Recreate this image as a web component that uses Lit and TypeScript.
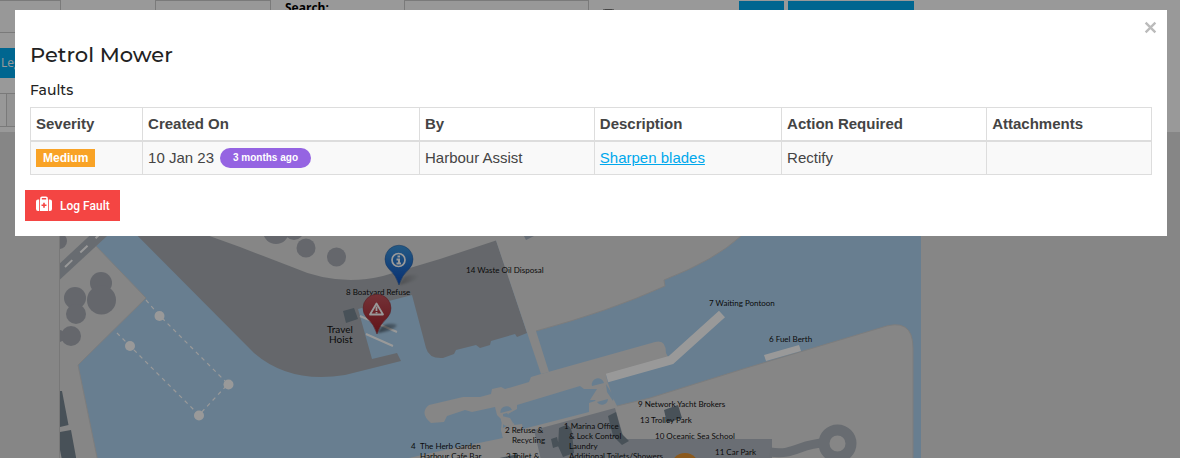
import { LitElement, html, css, svg } from "lit";
import { customElement, property } from "lit/decorators.js";

interface Fault {
  severity: string;
  created: string;
  age: string;
  by: string;
  description: string;
  action: string;
  attachments: string;
}

interface MapLabel {
  x: number;
  y: number;
  text: string;
  big?: boolean;
}

const LABELS: MapLabel[] = [
  { x: 466, y: 273, text: "14 Waste Oil Disposal" },
  { x: 346, y: 295, text: "8 Boatyard Refuse" },
  { x: 327, y: 333, text: "Travel", big: true },
  { x: 329, y: 343, text: "Hoist", big: true },
  { x: 709, y: 306, text: "7 Waiting Pontoon" },
  { x: 769, y: 342, text: "6 Fuel Berth" },
  { x: 638, y: 407, text: "9 Network Yacht Brokers" },
  { x: 640, y: 423, text: "13 Trolley Park" },
  { x: 655, y: 439, text: "10 Oceanic Sea School" },
  { x: 715, y: 455, text: "11 Car Park" },
  { x: 505, y: 433, text: "2 Refuse &" },
  { x: 512, y: 443, text: "Recycling" },
  { x: 506, y: 459, text: "3 Toilet &" },
  { x: 564, y: 429, text: "1 Marina Office" },
  { x: 569, y: 439, text: "& Lock Control" },
  { x: 569, y: 449, text: "Laundry" },
  { x: 569, y: 459, text: "Additional Toilets/Showers" },
  { x: 411, y: 449, text: "4" },
  { x: 420, y: 449, text: "The Herb Garden" },
  { x: 420, y: 459, text: "Harbour Cafe Bar" },
];

@customElement("marina-map")
export class MarinaMap extends LitElement {
  static styles = css`
    :host { display: block; }
    .map { display: block; width: 100%; max-width: 862px; height: auto; }
    .water { fill: #add2f0; }
    .land { fill: #dfdfdf; stroke: #cfd0d1; stroke-width: 1; }
    .plain { fill: #dfdfdf; }
    .yard { fill: #a8acb2; }
    .tree { fill: #a8acb5; }
    .road { fill: none; stroke: #adb4bc; }
    .lot { fill: #b1b8c1; }
    .building { fill: #788793; }
    .dash { fill: none; stroke: #ffffff; stroke-width: 1.2; stroke-dasharray: 4 4; }
    .white { fill: #ffffff; }
    .pontoon { fill: none; stroke: #ffffff; stroke-width: 9; }
    .line { fill: none; stroke: #ffffff; stroke-width: 2; }
    .label { font: 8px Lato, "Open Sans", sans-serif; fill: #111; }
    .big { font-size: 10px; }
  `;

  render() {
    return html`
      <svg class="map" viewBox="60 132 862 328" role="img" aria-label="Marina map">
        <defs>
          <linearGradient id="bluePin" x1="0" y1="0" x2="0" y2="1">
            <stop offset="0" stop-color="#3c96dc" />
            <stop offset="1" stop-color="#0c4fc0" />
          </linearGradient>
          <linearGradient id="redPin" x1="0" y1="0" x2="0" y2="1">
            <stop offset="0" stop-color="#c2545c" />
            <stop offset="1" stop-color="#a32029" />
          </linearGradient>
          <linearGradient id="shade" x1="0" y1="0" x2="1" y2="0">
            <stop offset="0" stop-color="#000" stop-opacity=".5" />
            <stop offset="1" stop-color="#000" stop-opacity="0" />
          </linearGradient>
          <filter id="soft"><feGaussianBlur stdDeviation="1.2" /></filter>
        </defs>
        <rect class="water" x="60" y="132" width="861" height="328" />

        <path class="land" d="M59 132H200L96 246L146 298L78 365L98 462H59Z" />
        <path class="road" stroke-width="12" d="M55 276L110 225" />
        <path class="line" stroke-dasharray="10 11" d="M65 267L100 234" />
        <g class="tree">
          <circle cx="59" cy="241" r="8" />
          <circle cx="101" cy="283" r="11" /><circle cx="101.500" cy="300" r="14.500" />
          <circle cx="75" cy="298" r="11" /><circle cx="76" cy="314" r="10" />
          <circle cx="71" cy="336" r="10" /><circle cx="59" cy="336" r="6" />
        </g>
        <path class="building" d="M60 391H62L68.500 425L60 427Z M60 432L71 430L76.500 460H62L60 450Z" />

        <path class="yard" d="M100 198H500L496 240L527 333L517 337L515 334L491 341L490 345L480 348L476 345L456 350L454 354L443 358Q429 359 426 348L412 295L358 309L372 359L397 353L401 361L345 375Q290 384 254 353Z" />
        <path class="plain" d="M190 229L240 247L292 267Q337 287 383 276L440 259L496 240.500L541 374L549 372L536 331Q610 311 665 286L664 280Q715 260 741 236L800 132H190Z" />
        <path fill="none" stroke="#cfd0d1" d="M536 331Q610 311 665 286L664 280Q715 260 741 236" />
        <path fill="#a8b4c2" d="M524 236H534L526 240Z" />
        <g class="tree">
          <circle cx="276" cy="231" r="13" /><circle cx="294" cy="230" r="10" />
          <circle cx="306" cy="248" r="9.500" /><circle cx="336.500" cy="257" r="9.500" />
        </g>
        <path class="building" d="M343 311L354 308L358 319L346 323Z" />
        <path class="line" stroke-width="2" d="M360 316L397 332M366 334L393 346" />

        <path class="plain" d="M429 405L463 397H480L491 394L492 389L501 387L505 389L529 382L531 377L541 374L655 342Q666 339 666 353L668 357L606 375L608 383L605 392L613 400H590L597 389L584 389L580 386L517 405V409L508 414L514 424L516 429L503 438L501 430L502 420L497 415L495 407L472 412L465 410L447 416L444 422L431 423Q419 413 429 405Z" />
        <path class="plain" d="M400 460L440 451L503 438L501 428L514 425L522 424L523 429L589 412V403L595 401L602 389L608 383L613 398L617 406L650 398L743 369L880 328Q913 316 913 348V460Z" />
        <path fill="none" stroke="#cfd0d1" d="M617 406L650 398L743 369L880 328Q913 316 913 348V460" />
        <g class="water">
          <path d="M500.500 413A6 6 0 0 1 512 410Z M503 414L507 413L515 422L503 428Z" />
          <path d="M592 386A6 6 0 0 1 604 383Z M597 402A6 6 0 0 0 608 399Z M606 384L614 397L613 401L607 392Z" />
        </g>
        <path class="plain" d="M502 416A6 6 0 0 0 513 423L510 418Z" />
        <path class="pontoon" d="M607 378L671 360L722 314" />
        <path class="white" d="M764 355L799 345L801 351L766 361Z" />

        <path class="lot" d="M534 430L615 408L624 439H772V460H541Z" />
        <path class="road" stroke-width="9" d="M770 452C795 456 800 443 825 443" />
        <circle class="road" cx="837.500" cy="443.500" r="13.500" stroke-width="11" />
        <path class="building" d="M608 416L616 412L622 434L629 441L622 445L613 436Z M551 439L557 437L559 446L553 448Z M559 428L566 425Q571 426 572 432L574 453L563 457L558 446Z M664 410L678 405L682 418L667 423Z M495 459L518 454V460Z" />

        <path class="dash" d="M146 300L159 315L228 384L199 415L130 346L115 331" />
        <g class="white">
          <circle cx="159.500" cy="316" r="5" /><circle cx="130" cy="346" r="5" />
          <circle cx="228.500" cy="384.500" r="5" /><circle cx="199" cy="415.500" r="5" />
        </g>

        ${LABELS.map((l) => svg`<text class=${l.big ? "label big" : "label"} x=${l.x} y=${l.y}>${l.text}</text>`)}

        <path fill="url(#shade)" filter="url(#soft)" d="M399 285L404 277Q413 273 419 276Q416 282 399 285Z M377 333L382 326Q391 322 397 325Q394 331 377 333Z" />
        <g fill="none" stroke="#fff">
          <path fill="url(#bluePin)" stroke="#24589c" stroke-width=".5" d="M399 285Q396 275 389 269A14 14 0 1 1 409 269Q402 275 399 285Z" />
          <circle cx="398.500" cy="260" r="6.500" stroke-width="1.700" />
          <path stroke-width="2" d="M397.500 256.500H400M396.500 259.500H399V263.500M396.500 263.500H401" />
          <path fill="url(#redPin)" stroke="#87333a" stroke-width=".5" d="M377 334Q374 324 367 318A14 14 0 1 1 387 318Q380 324 377 334Z" />
          <path stroke-width="1.800" stroke-linejoin="round" d="M376.500 303.500L383 314.500H370Z" />
          <path stroke-width="1.800" d="M376.500 306.500V311M376.500 312V313.500" />
        </g>
        <circle cx="685" cy="467" r="14" fill="#e89430" />
      </svg>
    `;
  }
}

@customElement("fault-dialog")
export class FaultDialog extends LitElement {
  @property({ attribute: false }) faults: Fault[] = [];

  static styles = css`
    :host { display: block; }
    .panel {
      background: #fff;
      color: #444;
      padding: 8px 15px 15px;
      font: 15px/20px "Liberation Sans", Arial, sans-serif;
    }
    .bar { display: flex; justify-content: flex-end; margin-right: -8px; }
    .close { border: 0; padding: 3px; background: none; display: flex; }
    .x { width: 13px; height: 13px; display: block; }
    .title, .subtitle { margin: 0; color: #222; font-family: Montserrat, Inter, sans-serif; }
    .title { font-size: 21px; line-height: 30px; font-weight: 500; margin-top: 3px; }
    .subtitle { font-size: 14px; line-height: 20px; font-weight: 500; margin: 10px 0 7px; }
    .faults { width: 100%; border-collapse: collapse; table-layout: fixed; }
    .faults th, .faults td {
      border: 1px solid #ddd;
      padding: 6px 5px;
      text-align: left;
      white-space: nowrap;
    }
    .faults th { border-bottom-width: 2px; }
    .faults td { background: #f9f9f9; }
    .c1 { width: 10%; } .c2 { width: 24.7%; } .c3 { width: 15.6%; }
    .c4 { width: 16.7%; } .c5 { width: 18.3%; }
    .row { display: flex; align-items: flex-end; gap: 6px; }
    .tag {
      background: #f9a326;
      color: #fff;
      font-weight: bold;
      font-size: 12px;
      line-height: 18px;
      padding: 0 7px;
    }
    .pill {
      background: #9564e2;
      color: #fff;
      font-weight: bold;
      font-size: 10px;
      line-height: 20px;
      padding: 0 13px;
      border-radius: 10px;
    }
    .link { color: #00a8ec; text-decoration: underline; }
    .log {
      display: flex;
      align-items: center;
      gap: 8px;
      border: 0;
      background: #f44543;
      color: #fff;
      margin: 15px 0 0 -5px;
      height: 31px;
      padding: 0 10px 0 11px;
      font: 500 12px/20px Roboto, sans-serif;
    }
    .kit { width: 16px; height: 16px; display: block; margin-top: -3px; }
  `;

  render() {
    return html`
      <section class="panel" role="dialog" aria-labelledby="title">
        <div class="bar">
          <button class="close" aria-label="Close">
            <svg class="x" viewBox="0 0 12 12"><path d="M1.500 1.500L10.500 10.500M10.500 1.500L1.500 10.500" stroke="#bbb" stroke-width="2.200" /></svg>
          </button>
        </div>
        <h1 class="title" id="title">Petrol Mower</h1>
        <h2 class="subtitle" id="faults">Faults</h2>
        <table class="faults" aria-labelledby="faults">
          <colgroup><col class="c1" /><col class="c2" /><col class="c3" /><col class="c4" /><col class="c5" /><col /></colgroup>
          <thead>
            <tr><th>Severity</th><th>Created On</th><th>By</th><th>Description</th><th>Action Required</th><th>Attachments</th></tr>
          </thead>
          <tbody>
            ${this.faults.map((f) => html`
              <tr>
                <td><div class="row"><span class="tag">${f.severity}</span></div></td>
                <td><div class="row"><span>${f.created}</span><span class="pill">${f.age}</span></div></td>
                <td>${f.by}</td>
                <td><a class="link" href="#fault">${f.description}</a></td>
                <td>${f.action}</td>
                <td>${f.attachments}</td>
              </tr>`)}
          </tbody>
        </table>
        <button class="log">
          <svg class="kit" viewBox="0 0 16 16" aria-hidden="true">
            <path fill="none" stroke="#fff" stroke-width="1.600" d="M5 4V2Q5 1.200 6 1.200H10Q11 1.200 11 2V4" />
            <path fill="#fff" d="M3.200 3.500V15H2Q0 15 0 13V5.500Q0 3.500 2 3.500ZM4 3.500H12V15H4ZM12.800 3.500H14Q16 3.500 16 5.500V13Q16 15 14 15H12.800Z" />
            <path fill="none" stroke="#f44543" stroke-width="1.600" d="M8 6.700V11.700M5.500 9.200H10.500" />
          </svg>
          Log Fault
        </button>
      </section>
    `;
  }
}

@customElement("app-root")
export class AppRoot extends LitElement {
  private faults: Fault[] = [
    {
      severity: "Medium",
      created: "10 Jan 23",
      age: "3 months ago",
      by: "Harbour Assist",
      description: "Sharpen blades",
      action: "Rectify",
      attachments: "",
    },
  ];

  static styles = css`
    :host {
      display: block;
      position: relative;
      height: 100vh;
      overflow: hidden;
      background: #dfdfdf;
      font: 12px/16px "Open Sans", "Noto Sans", sans-serif;
    }
    .filters { background: #fff; padding-bottom: 5px; }
    .fields {
      display: grid;
      grid-template-columns: 61px 94px 116px 133px 185px 150px 45px 130px;
      height: 33px;
    }
    .field { border: 1px solid #ccc; border-left-width: 0; background: #fefefe; }
    .boxed { border-left-width: 1px; }
    .caption { grid-column: 4; padding-left: 14px; font-weight: bold; color: #000; }
    .wide { grid-column: 5; }
    .tick { width: 13px; height: 13px; margin: 9px 0 0 13px; }
    .action { border: 0; background: #00aaf0; margin-top: 1px; }
    .main { margin-left: 4px; }
    .legend {
      display: block;
      border: 0;
      background: #00aaf0;
      color: #fff;
      font: inherit;
      height: 30px;
      margin: 15px 0;
      padding: 0 12px 0 1px;
    }
    .strip {
      height: 34px;
      box-sizing: border-box;
      border: solid #ccc;
      border-width: 1px 0;
      margin-right: 28px;
      background: #f5f5f5;
    }
    .first { width: 6px; height: 100%; background: #fefefe; border-right: 1px solid #ccc; }
    .chart { margin-left: 59px; border-left: 1px solid #c8c8c8; }
    .scrim { position: absolute; inset: 0; background: rgba(0, 0, 0, 0.4); padding: 10px 13px 0 15px; }
  `;

  render() {
    return html`
      <div class="filters">
        <div class="fields">
          <div class="field"></div>
          <div></div>
          <div class="field boxed"></div>
          <label class="caption" for="search">Search:</label>
          <input class="field boxed wide" id="search" />
          <input class="tick" type="checkbox" aria-label="Filter" />
          <button class="action" aria-label="Apply"></button>
          <button class="action main" aria-label="Reset"></button>
        </div>
        <button class="legend">Legend</button>
        <div class="strip"><div class="first"></div></div>
      </div>
      <div class="chart"><marina-map></marina-map></div>
      <div class="scrim"><fault-dialog .faults=${this.faults}></fault-dialog></div>
    `;
  }
}
